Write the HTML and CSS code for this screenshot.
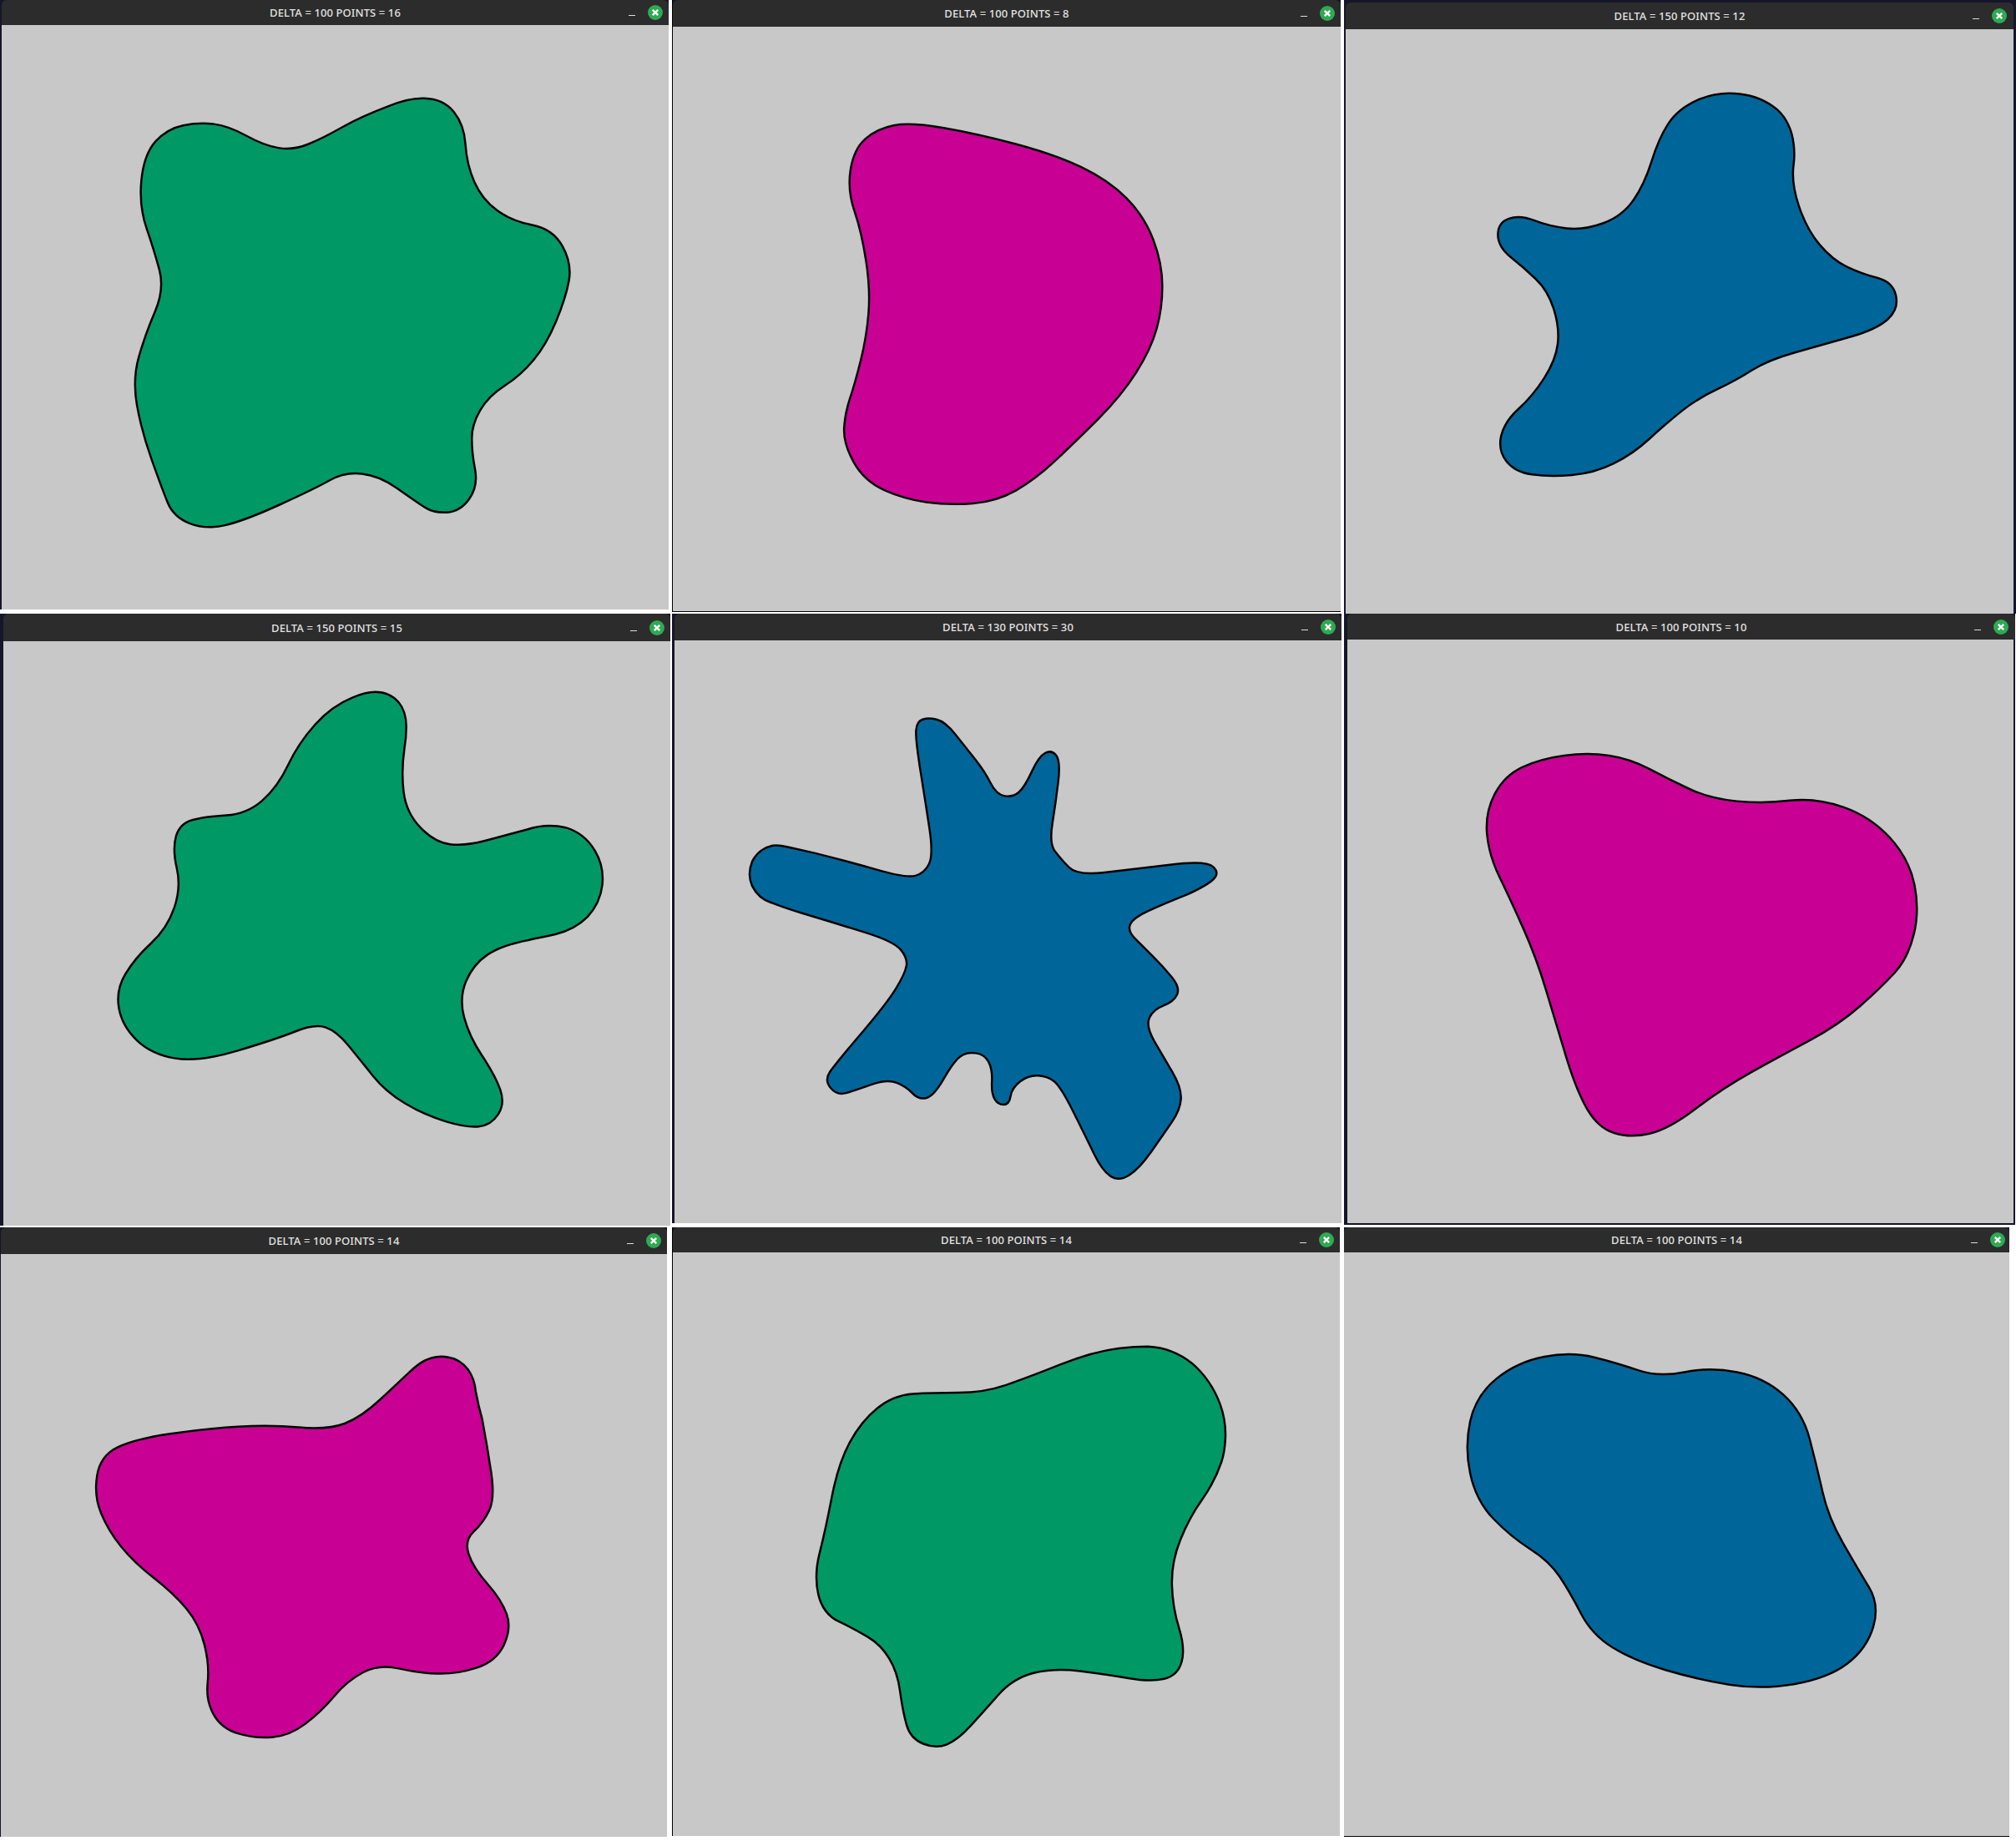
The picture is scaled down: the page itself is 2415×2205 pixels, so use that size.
FILE: index.html
```html
<!DOCTYPE html>
<html lang="en">
<head>
    <meta charset="UTF-8">
    <meta name="viewport" content="width=device-width, initial-scale=1.0">
    <title>Blob windows</title>
    <link rel="stylesheet" href="styles.css">
</head>
<body>
    <div class="desktop">
        <div class="window w1">
            <div class="titlebar"><span class="title">DELTA = 100 POINTS = 16</span><span class="min"></span><svg class="close" viewBox="0 0 18 18"><circle cx="9" cy="9" r="9"/><path d="M5.8 5.8L12.2 12.2M12.2 5.8L5.8 12.2"/></svg></div>
            <svg class="canvas" viewBox="1.3 19.48 518.8 454.5"><path class="blob green" d="M142.5 97.5Q155 95 166.5 96.5Q178 98 191.5 105.5Q205 113 216.5 115Q228 117 240 112Q252 107 266 99Q280 91 301 83Q318 76 330 76.5Q345 77 353 87Q361 97 362 112Q363 128 369 141.5Q375 155 386.5 163.5Q398 172 414 175Q430 178 437.5 191.5Q445 205 442.5 218.5Q440 232 432.5 250Q425 268 415 280Q405 292 392.5 300Q380 308 373.5 319Q367 330 367 341Q367 352 369.5 365Q372 378 365 388Q358 398 347.5 398.5Q337 399 329.5 394Q322 389 308.5 379.5Q295 370 281.5 368.5Q268 367 256.5 373.5Q245 380 217.5 392.5Q190 405 175 408.5Q160 412 147.5 407Q135 402 130.5 391Q126 380 118 357.5Q110 335 106.5 315Q103 295 108 277.5Q113 260 120.5 242.5Q128 225 124 210Q120 195 114 177.5Q108 160 110 140Q112 120 121 110Q130 100 142.5 97.5Z"/></svg>
        </div>
        <div class="window w2">
            <div class="titlebar"><span class="title">DELTA = 100 POINTS = 8</span><span class="min"></span><svg class="close" viewBox="0 0 18 18"><circle cx="9" cy="9" r="9"/><path d="M5.8 5.8L12.2 12.2M12.2 5.8L5.8 12.2"/></svg></div>
            <svg class="canvas" viewBox="523.3 20.78 519.4 454.5"><path class="blob magenta" d="M695 97.5Q708 95 734 99.5Q760 104 790 112Q820 120 841 130Q862 140 876 154Q890 168 897 186.5Q904 205 904 222.5Q904 240 899.5 256Q895 272 883.5 290Q872 308 854 326Q836 344 820.5 358.5Q805 373 790 381.5Q775 390 756.5 391.5Q738 393 720.5 390.5Q703 388 687.5 381Q672 374 664 359.5Q656 345 656.5 333.5Q657 322 661 310Q665 298 669.5 280Q674 262 675.5 243.5Q677 225 673.5 202.5Q670 180 664.5 164Q659 148 661.5 132Q664 116 673 108Q682 100 695 97.5Z"/></svg>
        </div>
        <div class="window w3">
            <div class="titlebar"><span class="title">DELTA = 150 POINTS = 12</span><span class="min"></span><svg class="close" viewBox="0 0 18 18"><circle cx="9" cy="9" r="9"/><path d="M5.8 5.8L12.2 12.2M12.2 5.8L5.8 12.2"/></svg></div>
            <svg class="canvas" viewBox="1046.6 22.72 519.4 454.5"><path class="blob blue" d="M1322 77Q1337 71 1353 73Q1370 75 1382 85Q1393 95 1395 112Q1396 120 1395 128Q1393 142 1399 160Q1405 178 1415 190Q1425 202 1436.5 207.5Q1448 213 1460 216Q1472 219 1474.5 229.5Q1477 240 1468.5 248Q1460 256 1439 262Q1418 268 1396.5 274Q1375 280 1362.5 288Q1350 296 1335 303Q1320 310 1307.5 320Q1295 330 1282.5 341.5Q1270 353 1255 360.5Q1240 368 1222.5 369.5Q1205 371 1191.5 369Q1178 367 1171.5 358.5Q1165 350 1167.5 339Q1170 328 1181 318Q1192 308 1201 294Q1210 280 1211.5 267.5Q1213 255 1208.5 240.5Q1204 226 1194.5 217Q1185 208 1175 200Q1165 192 1165 182.5Q1165 173 1173.5 170Q1182 167 1193.5 171.5Q1205 176 1218.5 177.5Q1232 179 1247 173.5Q1262 168 1270.5 155.5Q1279 143 1284.5 125.5Q1290 108 1297 97Q1305 84 1322 77Z"/></svg>
        </div>
        <div class="window w4">
            <div class="titlebar"><span class="title">DELTA = 150 POINTS = 15</span><span class="min"></span><svg class="close" viewBox="0 0 18 18"><circle cx="9" cy="9" r="9"/><path d="M5.8 5.8L12.2 12.2M12.2 5.8L5.8 12.2"/></svg></div>
            <svg class="canvas" viewBox="2.6 498.6 518.8 454.5"><path class="blob green" d="M274 542.5Q284 538 292 538Q303 538 310 546Q316 553 316 565Q316 574 314.5 582.5Q312 600 314 616Q316 632 327 643.5Q338 655 350 656.5Q362 658 378.5 653.5Q395 649 410 645Q425 640 440 643.5Q455 648 463 662Q470 674 468.5 688Q467 702 457 713Q447 723 432 726.5Q420 729 411 731Q390 735 379 742.5Q368 750 362.5 763Q357 776 361 791Q365 806 375 821Q385 836 389 847Q393 858 387.5 866.5Q382 875 372.5 876Q363 877 346.5 872Q330 867 315 858Q300 849 290 836.5Q280 824 271 813Q262 802 253.5 799Q245 796 230 802Q215 808 185 817Q155 826 136.5 823Q118 820 106.5 809Q95 798 92.5 784Q90 770 97.5 757.5Q105 745 117.5 733.5Q130 722 135.5 706Q141 690 137.5 675Q134 660 137 650Q140 640 150 637.5Q160 635 176 634Q192 633 204 622.5Q216 612 224 595Q232 578 245 563.5Q258 549 274 542.5Z"/></svg>
        </div>
        <div class="window w5">
            <div class="titlebar"><span class="title">DELTA = 130 POINTS = 30</span><span class="min"></span><svg class="close" viewBox="0 0 18 18"><circle cx="9" cy="9" r="9"/><path d="M5.8 5.8L12.2 12.2M12.2 5.8L5.8 12.2"/></svg></div>
            <svg class="canvas" viewBox="524.6 498 518.8 453.2"><path class="blob blue" d="M717.5 559.5Q722 558 728.5 559.5Q735 561 743 571Q751 581 758.5 590.5Q766 600 770.5 609Q775 618 781.5 619Q788 620 792.5 616Q797 612 802.5 600Q808 588 813 585.5Q818 583 821.5 587.5Q825 592 823 608.5Q821 625 818.5 640.5Q816 656 820.5 662Q825 668 831.5 674.5Q838 681 859 678.5Q880 676 910 672.5Q938 669 943.5 674Q949 679 943.5 684Q938 689 922.5 696Q905 703 893 708.5Q881 714 879 719Q877 724 882.5 729.5Q888 735 896.5 743.5Q905 752 911.5 760Q918 768 915.5 773.5Q913 779 905 782Q897 785 894 791.5Q891 798 898 810Q905 822 912 834Q919 846 918.5 854.5Q918 863 911.5 872.5Q905 882 895.5 895.5Q886 909 878 914Q870 919 863.5 914.5Q857 910 851 897.5Q845 885 835 865Q825 845 820 841Q815 837 807.5 836.5Q800 836 793.5 841Q787 846 786 852.5Q785 859 780.5 859Q776 859 773.5 854.5Q771 850 771.5 841Q772 832 769 826Q766 820 759 819Q752 818 747 821.5Q742 825 734 839Q726 853 720 854Q714 855 709.5 850Q705 845 697.5 842Q690 839 677.5 843.5Q665 848 658 850Q651 852 646 846Q641 840 645.5 833.5Q650 827 670 803.5Q690 780 697 768.5Q704 757 705 751Q706 745 700.5 738.5Q695 732 672.5 725Q650 718 625 710.5Q610 706 600 702Q590 699 585 689Q581 680 585 670Q590 660 601 657.5Q606 657 612 658.5Q623 661 634 663.5Q660 670 682.5 676.5Q705 683 712 681Q719 679 722.5 672Q726 665 723 645Q720 625 716 600Q712 575 712.5 568Q713 561 717.5 559.5Z"/></svg>
        </div>
        <div class="window w6">
            <div class="titlebar"><span class="title">DELTA = 100 POINTS = 10</span><span class="min"></span><svg class="close" viewBox="0 0 18 18"><circle cx="9" cy="9" r="9"/><path d="M5.8 5.8L12.2 12.2M12.2 5.8L5.8 12.2"/></svg></div>
            <svg class="canvas" viewBox="1047.9 497.3 518.1 453.8"><path class="blob magenta" d="M1216.5 587.5Q1235 585 1251.5 587.5Q1268 590 1283 598Q1298 606 1314 613.5Q1330 621 1351 623Q1372 625 1392 622.5Q1412 620 1433.5 627.5Q1455 635 1470 651.5Q1485 668 1489 688Q1493 708 1488.5 726.5Q1484 745 1473.5 756.5Q1463 768 1446.5 782.5Q1430 797 1407.5 809Q1385 821 1362.5 833.5Q1340 846 1319 862Q1298 878 1283 881.5Q1268 885 1255.5 881Q1243 877 1234.5 862.5Q1226 848 1218 821.5Q1210 795 1202.5 770Q1195 745 1185 722.5Q1175 700 1166.5 682.5Q1158 665 1156.5 648.5Q1155 632 1162.5 617.5Q1170 603 1184 596.5Q1198 590 1216.5 587.5Z"/></svg>
        </div>
        <div class="window w7">
            <div class="titlebar"><span class="title">DELTA = 100 POINTS = 14</span><span class="min"></span><svg class="close" viewBox="0 0 18 18"><circle cx="9" cy="9" r="9"/><path d="M5.8 5.8L12.2 12.2M12.2 5.8L5.8 12.2"/></svg></div>
            <svg class="canvas" viewBox="0.65 975.2 518.1 453.2"><path class="blob magenta" d="M335.5 1056Q342 1054 349 1055.5Q358 1057 364 1065Q369 1072 370 1082Q372 1093 375 1103.5Q379 1125 382 1145Q385 1165 380.5 1174.5Q376 1184 368.5 1191Q361 1198 364.5 1208.5Q368 1219 379 1231.5Q390 1244 394 1255Q398 1266 392 1279Q386 1292 370.5 1297Q355 1302 340 1301.5Q325 1301 310 1297.5Q295 1294 282.5 1300.5Q270 1307 260 1319Q250 1331 237.5 1340.5Q225 1350 211.5 1351Q198 1352 185 1348Q172 1344 166 1333Q160 1322 161.5 1308.5Q163 1295 159 1279Q155 1263 145 1251Q135 1239 119.5 1227Q104 1215 94 1202.5Q84 1190 78.5 1176.5Q73 1163 75.5 1147.5Q78 1132 91.5 1125.5Q105 1119 132.5 1115Q160 1111 185 1109.5Q210 1108 232.5 1110Q255 1112 268 1107Q281 1102 295.5 1088.5Q310 1075 319 1066.5Q328 1058 335.5 1056Z"/></svg>
        </div>
        <div class="window w8">
            <div class="titlebar"><span class="title">DELTA = 100 POINTS = 14</span><span class="min"></span><svg class="close" viewBox="0 0 18 18"><circle cx="9" cy="9" r="9"/><path d="M5.8 5.8L12.2 12.2M12.2 5.8L5.8 12.2"/></svg></div>
            <svg class="canvas" viewBox="523.3 973.9 518.8 453.8"><path class="blob green" d="M870 1048.5Q882 1047 893 1047Q912 1048 927 1060Q942 1073 949 1092Q954 1106 953 1120Q952.5 1129 950 1137Q945 1152 935 1166Q925 1180 918 1197.5Q911 1215 911.5 1232.5Q912 1250 917 1266Q922 1282 919 1292.5Q916 1303 905.5 1305.5Q895 1308 877.5 1305Q860 1302 840 1299.5Q820 1297 804 1301Q788 1305 776.5 1318Q765 1331 755 1342Q745 1353 736.5 1356.5Q728 1360 718 1356Q708 1352 705 1341Q702 1330 700 1315Q698 1300 691.5 1289.5Q685 1279 675 1273Q665 1267 652.5 1261Q640 1255 636.5 1240Q633 1225 637.5 1207.5Q642 1190 647 1164Q652 1138 661 1121.5Q670 1105 682.5 1095Q695 1085 710 1084Q725 1083 745 1083Q765 1083 782.5 1077Q800 1071 825 1061Q850 1051 870 1048.5Z"/></svg>
        </div>
        <div class="window w9">
            <div class="titlebar"><span class="title">DELTA = 100 POINTS = 14</span><span class="min"></span><svg class="close" viewBox="0 0 18 18"><circle cx="9" cy="9" r="9"/><path d="M5.8 5.8L12.2 12.2M12.2 5.8L5.8 12.2"/></svg></div>
            <svg class="canvas" viewBox="1045.3 973.9 517.5 453.8"><path class="blob blue" d="M1201 1055Q1222 1051 1240 1055.5Q1258 1060 1274 1065.5Q1290 1071 1310 1067Q1330 1063 1351 1067Q1372 1071 1387 1084.5Q1402 1098 1407.5 1119Q1413 1140 1417.5 1160Q1422 1180 1433.5 1200Q1445 1220 1453.5 1234Q1462 1248 1457 1265Q1452 1282 1437 1293.5Q1422 1305 1396 1309.5Q1370 1314 1345 1310Q1320 1306 1295 1298.5Q1270 1291 1254 1281Q1238 1271 1229.5 1254.5Q1221 1238 1213 1226Q1205 1214 1190 1204.5Q1175 1195 1161.5 1181Q1148 1167 1143.5 1146Q1139 1125 1143.5 1105Q1148 1085 1164 1072Q1180 1059 1201 1055Z"/></svg>
        </div>
    </div>
</body>
</html>
```
FILE: styles.css
```css
body {
    margin: 0;
    background: #fff;
    font-family: 'Noto Sans', sans-serif;
}

.desktop {
    position: relative;
    width: 2415px;
    height: 2205px;
    overflow: hidden;
}

.window {
    --strip: #15152b;
    --close: 7px;
    position: absolute;
    display: flex;
    flex-direction: column;
    background: var(--strip);
    box-sizing: border-box;
}

.w1 { left: 0; top: 0; width: 801px; height: 730px; --bar: 30px; border-left: 2px solid var(--strip); }
.w2 { left: 805px; top: 0; width: 801px; height: 733px; --bar: 32px; border-left: 1px solid #000; border-bottom: 1px solid #000; }
.w3 { left: 1610px; top: 0; width: 805px; height: 735px; --bar: 32px; --close: 8px; border: 3px solid var(--strip); border-left-width: 2px; border-bottom: 0; }
.w4 { left: 0; top: 735px; width: 803px; height: 733px; --bar: 33px; border-left: 4px solid var(--strip); }
.w5 { left: 805px; top: 735px; width: 802px; height: 730px; --bar: 32px; border-left: 3px solid var(--strip); }
.w6 { left: 1610px; top: 735px; width: 804px; height: 732px; --bar: 31px; --close: 8px; border: 2px solid var(--strip); border-left-width: 4px; border-top: 0; }
.w7 { left: 0; top: 1470px; width: 799px; height: 730px; --bar: 32px; border-left: 1px solid var(--strip); }
.w8 { left: 805px; top: 1470px; width: 800px; height: 729px; --bar: 30px; border-left: 1px solid #000; }
.w9 { left: 1610px; top: 1470px; width: 797px; height: 730px; --bar: 30px; --close: 5px; border-bottom: 1px solid #000; }

.titlebar {
    position: relative;
    flex: none;
    height: var(--bar);
    background: #2c2c2c;
    border-radius: 6px 6px 0 0;
    display: flex;
    align-items: center;
    justify-content: center;
}

.w6 .titlebar {
    margin-right: -2px;
}

.title {
    color: #e2e2e2;
    font-size: 13px;
    font-weight: 500;
    letter-spacing: 0.1px;
}

.min {
    position: absolute;
    right: calc(var(--close) + 33px);
    top: 60%;
    width: 8px;
    height: 1px;
    background: #ddd;
}

.close {
    position: absolute;
    right: var(--close);
    top: 50%;
    width: 18px;
    height: 18px;
    margin-top: -9px;
}

.close circle {
    fill: #2eaa53;
}

.close path {
    stroke: #fff;
    stroke-width: 2.4;
    fill: none;
}

.canvas {
    display: block;
    flex: 1;
    min-height: 0;
    width: 100%;
    background: #c8c8c8;
}

.blob {
    stroke: #000;
    stroke-width: 2.5px;
    vector-effect: non-scaling-stroke;
}

.green { fill: #009966; }
.magenta { fill: #c90094; }
.blue { fill: #006699; }
```
